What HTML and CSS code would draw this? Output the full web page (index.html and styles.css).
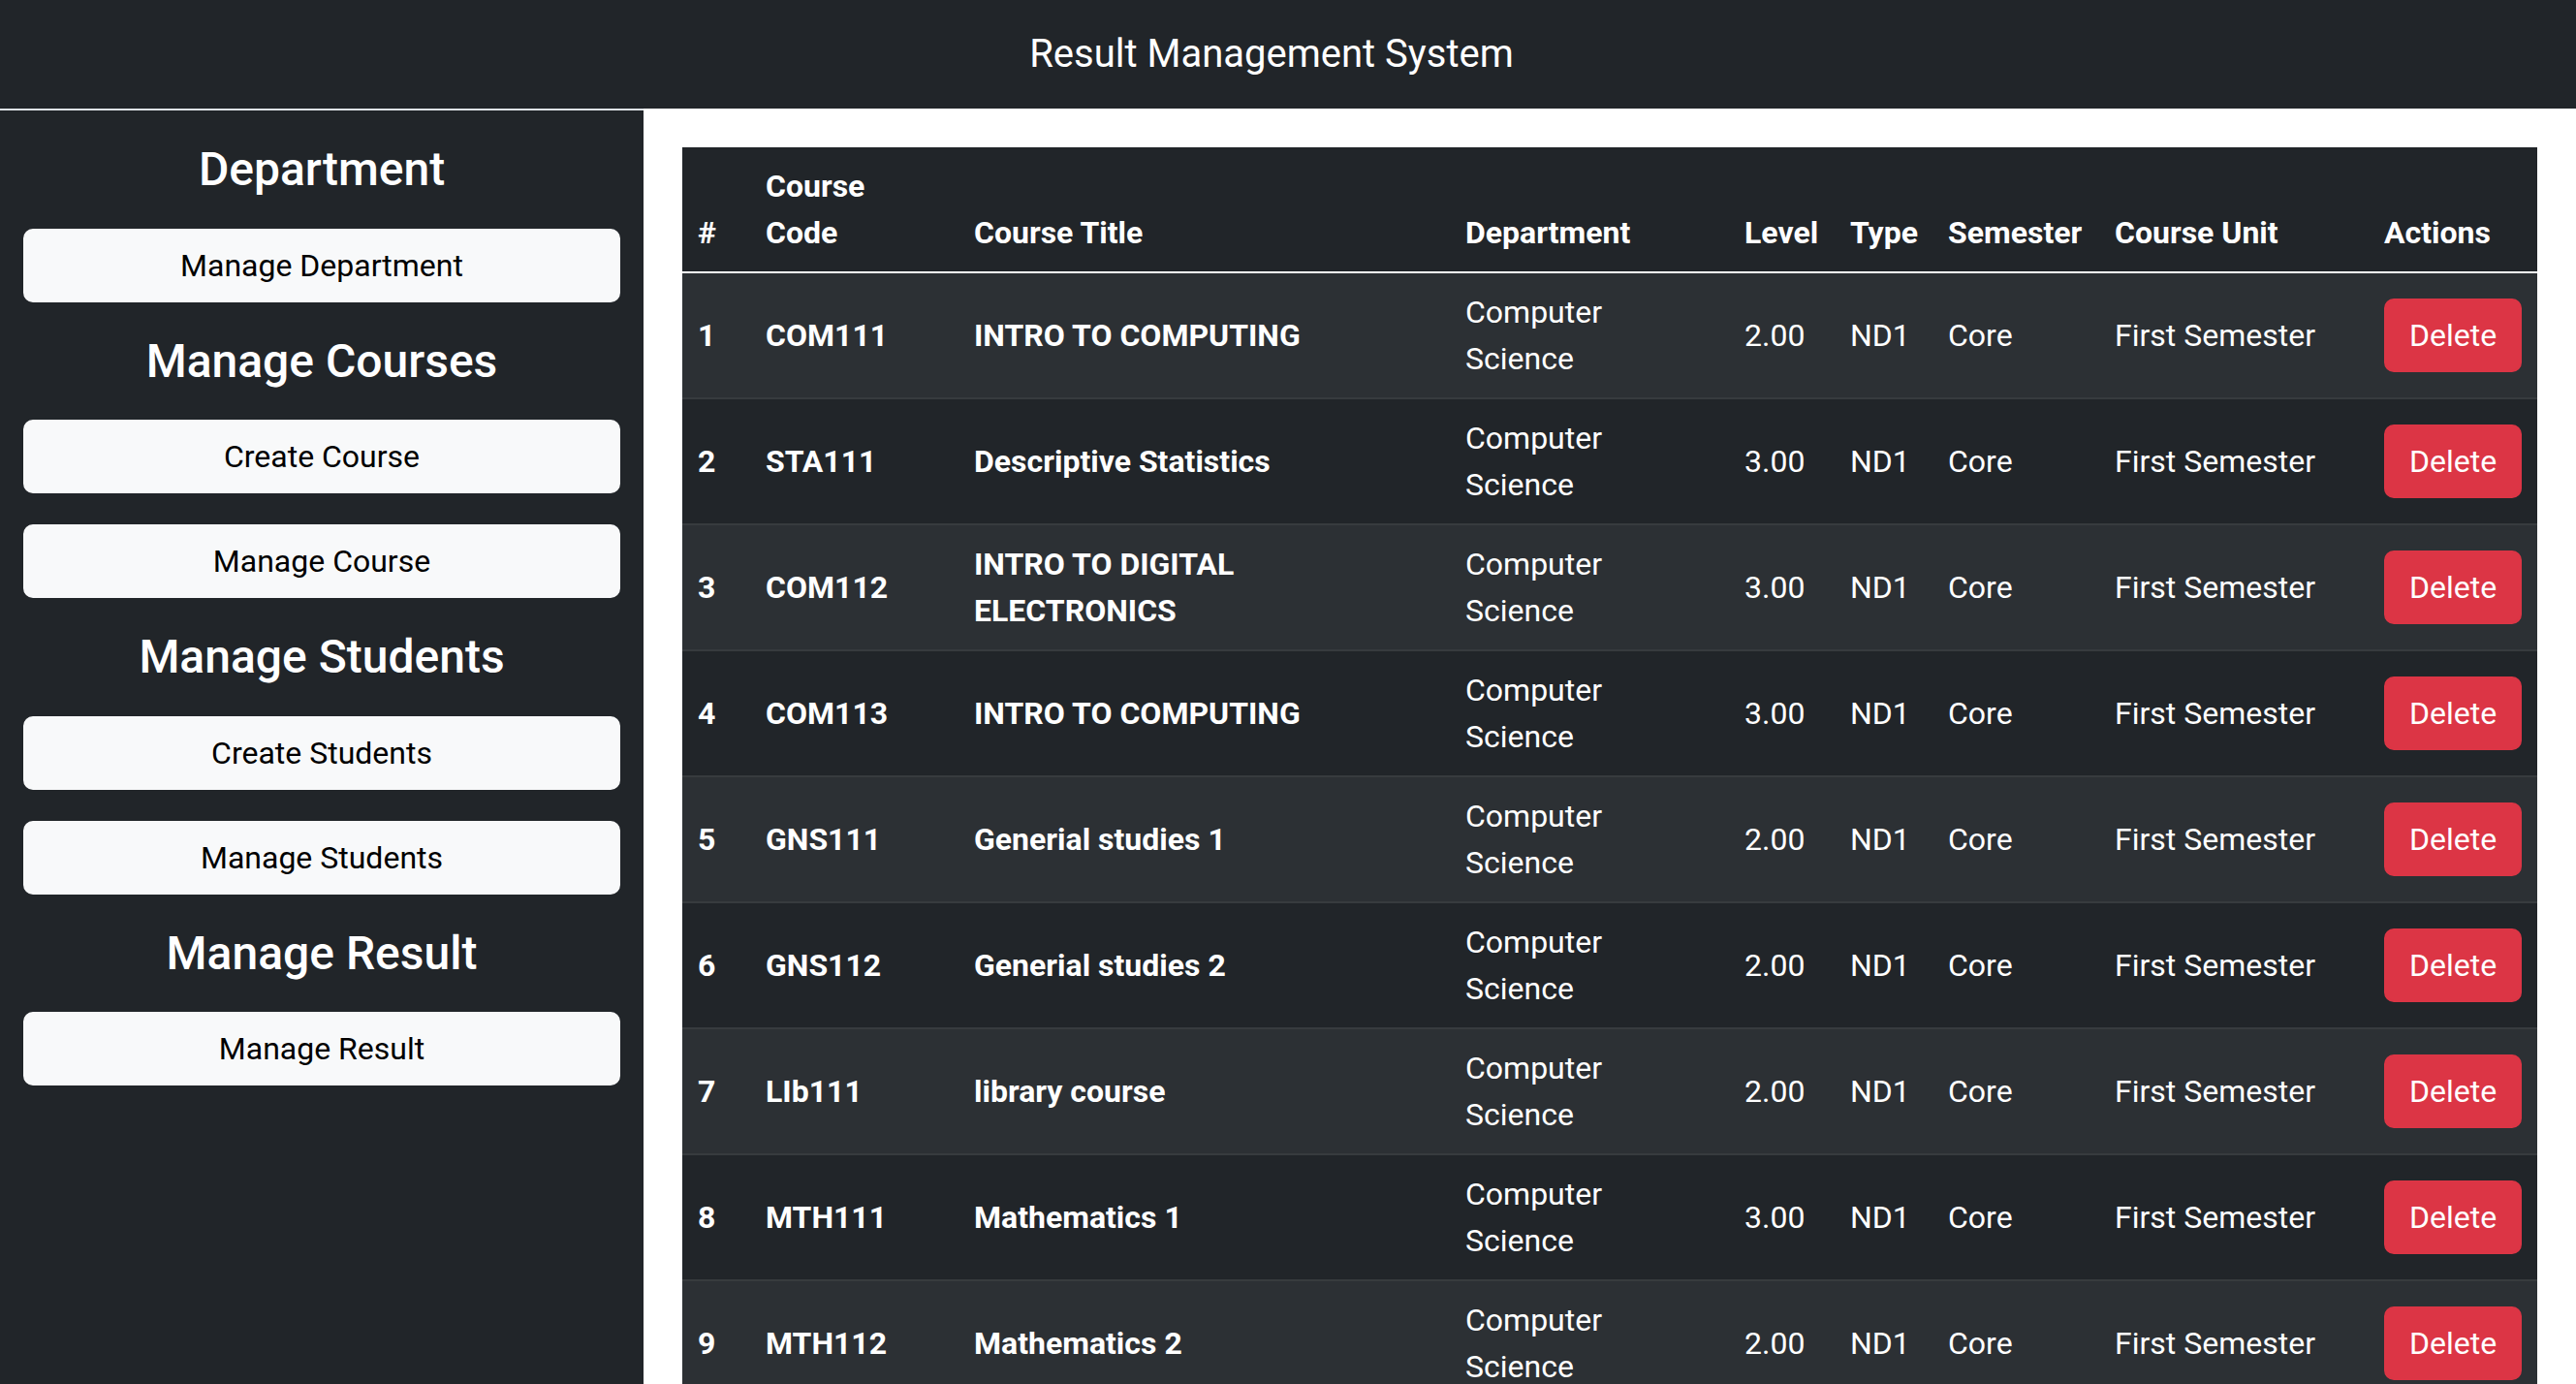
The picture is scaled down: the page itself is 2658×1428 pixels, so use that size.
FILE: index.html
```html
<!DOCTYPE html>
<html lang="en">
<head>
<meta charset="utf-8">
<title>Result Management System</title>
<link rel="stylesheet" href="styles.css">
</head>
<body>
<header class="topbar">
  <span class="brand">Result Management System</span>
</header>
<div class="layout">
  <aside class="sidebar">
    <h4 class="side-title">Department</h4>
    <a class="side-btn">Manage Department</a>
    <h4 class="side-title">Manage Courses</h4>
    <a class="side-btn">Create Course</a>
    <a class="side-btn">Manage Course</a>
    <h4 class="side-title">Manage Students</h4>
    <a class="side-btn">Create Students</a>
    <a class="side-btn">Manage Students</a>
    <h4 class="side-title">Manage Result</h4>
    <a class="side-btn">Manage Result</a>
  </aside>
  <main class="content">
    <table class="courses">
      <colgroup>
        <col class="c-num"><col class="c-code"><col class="c-title"><col class="c-dept"><col class="c-level"><col class="c-type"><col class="c-sem"><col class="c-unit"><col class="c-act">
      </colgroup>
      <thead>
        <tr>
          <th>#</th><th>Course<br>Code</th><th>Course Title</th><th>Department</th><th>Level</th><th>Type</th><th>Semester</th><th>Course Unit</th><th>Actions</th>
        </tr>
      </thead>
      <tbody>
        <tr><td class="b">1</td><td class="b">COM111</td><td class="b">INTRO TO COMPUTING</td><td>Computer Science</td><td>2.00</td><td>ND1</td><td>Core</td><td>First Semester</td><td><button class="del">Delete</button></td></tr>
        <tr><td class="b">2</td><td class="b">STA111</td><td class="b">Descriptive Statistics</td><td>Computer Science</td><td>3.00</td><td>ND1</td><td>Core</td><td>First Semester</td><td><button class="del">Delete</button></td></tr>
        <tr><td class="b">3</td><td class="b">COM112</td><td class="b">INTRO TO DIGITAL ELECTRONICS</td><td>Computer Science</td><td>3.00</td><td>ND1</td><td>Core</td><td>First Semester</td><td><button class="del">Delete</button></td></tr>
        <tr><td class="b">4</td><td class="b">COM113</td><td class="b">INTRO TO COMPUTING</td><td>Computer Science</td><td>3.00</td><td>ND1</td><td>Core</td><td>First Semester</td><td><button class="del">Delete</button></td></tr>
        <tr><td class="b">5</td><td class="b">GNS111</td><td class="b">Generial studies 1</td><td>Computer Science</td><td>2.00</td><td>ND1</td><td>Core</td><td>First Semester</td><td><button class="del">Delete</button></td></tr>
        <tr><td class="b">6</td><td class="b">GNS112</td><td class="b">Generial studies 2</td><td>Computer Science</td><td>2.00</td><td>ND1</td><td>Core</td><td>First Semester</td><td><button class="del">Delete</button></td></tr>
        <tr><td class="b">7</td><td class="b">LIb111</td><td class="b">library course</td><td>Computer Science</td><td>2.00</td><td>ND1</td><td>Core</td><td>First Semester</td><td><button class="del">Delete</button></td></tr>
        <tr><td class="b">8</td><td class="b">MTH111</td><td class="b">Mathematics 1</td><td>Computer Science</td><td>3.00</td><td>ND1</td><td>Core</td><td>First Semester</td><td><button class="del">Delete</button></td></tr>
        <tr><td class="b">9</td><td class="b">MTH112</td><td class="b">Mathematics 2</td><td>Computer Science</td><td>2.00</td><td>ND1</td><td>Core</td><td>First Semester</td><td><button class="del">Delete</button></td></tr>
      </tbody>
    </table>
  </main>
</div>
</body>
</html>
```

FILE: styles.css
```css
* { box-sizing: border-box; }
html, body {
  margin: 0;
  height: 100%;
  overflow: hidden;
}
body {
  font-family: Roboto, "Liberation Sans", sans-serif;
  font-size: 32px;
  line-height: 48px;
  color: #fff;
  background: #fff;
  display: flex;
  flex-direction: column;
}
.topbar {
  height: 112px;
  flex: none;
  background: #212529;
  display: flex;
  align-items: center;
  justify-content: center;
  padding-right: 34px;
}
.brand {
  font-size: 40px;
  line-height: 60px;
  color: #fff;
}
.layout {
  flex: 1;
  display: flex;
  min-height: 0;
}
.sidebar {
  width: 664px;
  flex: none;
  background: #212529;
  border-top: 2px solid #dee2e6;
  padding: 32px 24px 0;
  display: flex;
  flex-direction: column;
  gap: 32px;
}
.side-title {
  margin: 0;
  font-size: 48px;
  line-height: 1.2;
  font-weight: 500;
  text-align: center;
  color: #fff;
}
.side-btn {
  display: block;
  background: #f8f9fa;
  border: 2px solid #f8f9fa;
  border-radius: 10px;
  color: #000;
  text-align: center;
  padding: 12px 24px;
  font-size: 32px;
  line-height: 48px;
}
.content {
  flex: 1;
  padding: 40px 40px 0;
  overflow: hidden;
}
.courses {
  width: 100%;
  table-layout: fixed;
  border-collapse: collapse;
  background: #212529;
  color: #fff;
}
.c-num { width: 70px; }
.c-code { width: 215px; }
.c-title { width: 507px; }
.c-dept { width: 288px; }
.c-level { width: 109px; }
.c-type { width: 101px; }
.c-sem { width: 172px; }
.c-unit { width: 278px; }
.c-act { width: 174px; }
.courses th {
  text-align: left;
  font-weight: 700;
  vertical-align: bottom;
  padding: 16px;
  border-bottom: 2px solid #fff;
}
.courses td {
  padding: 16px;
  vertical-align: middle;
  border-bottom: 2px solid #373b3e;
}
.courses tbody tr:nth-child(odd) td {
  background: #2c3034;
}
.courses td.b { font-weight: 700; }
.del {
  font-family: Roboto, "Liberation Sans", sans-serif;
  font-size: 32px;
  line-height: 48px;
  color: #fff;
  background: #dc3545;
  border: 2px solid #dc3545;
  border-radius: 10px;
  padding: 12px 24px;
  cursor: pointer;
}
```
